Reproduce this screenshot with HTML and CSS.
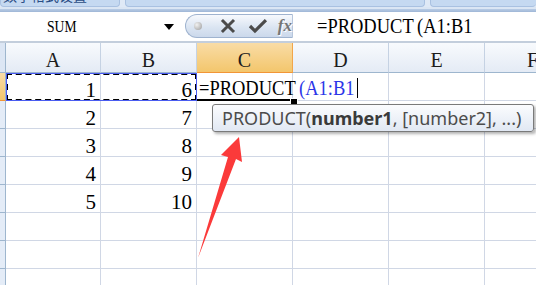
FILE: index.html
```html
<!DOCTYPE html>
<html lang="zh">
<head>
    <meta charset="UTF-8">
    <title>PRODUCT</title>
    <link rel="stylesheet" href="styles.css">
</head>
<body>
    <div class="ribbon">
        <div class="tabs">
            <div class="tab tab-first"><span class="tab-label">数字格式设置</span></div>
            <div class="tab tab-mid"></div>
            <div class="tab tab-last"></div>
        </div>
        <div class="ribbon-line"></div>
    </div>

    <div class="formula-bar">
        <div class="name-box">
            <span class="name">SUM</span>
            <span class="drop"></span>
        </div>
        <div class="fx-buttons">
            <span class="grip"></span>
            <svg class="btn-icon" width="16" height="16" viewBox="0 0 16 16">
                <path d="M3 3 L13 13 M13 3 L3 13" stroke="#4b4b4b" stroke-width="3" stroke-linecap="square"/>
            </svg>
            <svg class="btn-icon" width="20" height="16" viewBox="0 0 20 16">
                <path d="M2 8 L7 13 L18 2" stroke="#4b4b4b" stroke-width="3.2" fill="none"/>
            </svg>
            <span class="fx">fx</span>
        </div>
        <div class="formula-input">
            <span class="formula-text">=PRODUCT<span class="paren">(</span>A1:B1</span>
        </div>
    </div>
    <div class="bar-line"></div>

    <div class="sheet">
        <div class="corner"></div>
        <div class="col-head">A</div>
        <div class="col-head">B</div>
        <div class="col-head col-active">C</div>
        <div class="col-head">D</div>
        <div class="col-head">E</div>
        <div class="col-head">F</div>

        <div class="row-head row-active"></div>
        <div class="cell num">1</div>
        <div class="cell num">6</div>
        <div class="cell cell-edit">
            <span class="formula-text">=PRODUCT<span class="ref"><span class="paren">(</span>A1:B1</span></span><span class="caret"></span>
        </div>
        <div class="cell"></div>
        <div class="cell"></div>
        <div class="cell"></div>

        <div class="row-head"></div>
        <div class="cell num">2</div>
        <div class="cell num">7</div>
        <div class="cell"></div>
        <div class="cell"></div>
        <div class="cell"></div>
        <div class="cell"></div>

        <div class="row-head"></div>
        <div class="cell num">3</div>
        <div class="cell num">8</div>
        <div class="cell"></div>
        <div class="cell"></div>
        <div class="cell"></div>
        <div class="cell"></div>

        <div class="row-head"></div>
        <div class="cell num">4</div>
        <div class="cell num">9</div>
        <div class="cell"></div>
        <div class="cell"></div>
        <div class="cell"></div>
        <div class="cell"></div>

        <div class="row-head"></div>
        <div class="cell num">5</div>
        <div class="cell num">10</div>
        <div class="cell"></div>
        <div class="cell"></div>
        <div class="cell"></div>
        <div class="cell"></div>

        <div class="row-head"></div>
        <div class="cell"></div>
        <div class="cell"></div>
        <div class="cell"></div>
        <div class="cell"></div>
        <div class="cell"></div>
        <div class="cell"></div>

        <div class="row-head"></div>
        <div class="cell"></div>
        <div class="cell"></div>
        <div class="cell"></div>
        <div class="cell"></div>
        <div class="cell"></div>
        <div class="cell"></div>

        <div class="row-head"></div>
        <div class="cell"></div>
        <div class="cell"></div>
        <div class="cell"></div>
        <div class="cell"></div>
        <div class="cell"></div>
        <div class="cell"></div>

        <!-- copy marquee around A1:B1 -->
        <div class="marquee"></div>
        <div class="fill-handle"></div>

        <div class="tooltip">PRODUCT(<b>number1</b>, [number2], ...)</div>
    </div>

    <svg class="arrow" width="536" height="285" viewBox="0 0 536 285">
        <polygon points="198,258 228,157 221,155 239,137 242,162 236,159" fill="#fb3a3a"/>
    </svg>
</body>
</html>
```

FILE: styles.css
```css
body {
    margin: 0;
    padding: 0;
    width: 536px;
    height: 285px;
    overflow: hidden;
    background-color: #fff;
    position: relative;
    font-family: 'Liberation Serif', serif;
}

/* ribbon remains at the top */
.ribbon {
    height: 12px;
    background-color: #dbe6f4;
}

.tabs {
    display: flex;
    gap: 5px;
    height: 7px;
    background-color: #dfe9f6;
}

.tab {
    background-color: #c5d9f1;
    border: 1px solid #a9c1e1;
    border-top: none;
    border-radius: 0 0 4px 4px;
    overflow: hidden;
}

.tab-first {
    width: 118px;
}

.tab-mid {
    width: 298px;
}

.tab-last {
    flex: 1;
    border-right: none;
}

.tab-label {
    display: block;
    margin-top: -13px;
    margin-left: 2px;
    font-family: 'Noto Sans CJK SC', sans-serif;
    font-size: 14px;
    line-height: 16px;
    color: #2a4d85;
    white-space: nowrap;
}

.ribbon-line {
    height: 3px;
    margin-top: 2px;
    background: linear-gradient(#b9cde6, #9fb6d6);
}

/* formula bar */
.formula-bar {
    display: flex;
    height: 29px;
    background-color: #fff;
}

.name-box {
    width: 185px;
    display: flex;
    align-items: center;
}

.name {
    display: inline-block;
    margin-left: 47px;
    font-size: 17px;
    transform: scaleX(0.8);
    transform-origin: left center;
}

.drop {
    margin-left: auto;
    margin-right: 11px;
    width: 0;
    height: 0;
    border-left: 5px solid transparent;
    border-right: 5px solid transparent;
    border-top: 6px solid #000;
}

.fx-buttons {
    width: 108px;
    height: 24px;
    margin-top: 2px;
    display: flex;
    align-items: center;
    box-sizing: border-box;
    border: 1px solid #9fb3cf;
    border-right: 1px solid #b6c6dc;
    border-radius: 12px 0 0 12px;
    background: linear-gradient(#f7f9fd, #dbe5f2 55%, #cbd8eb);
}

.grip {
    width: 8px;
    height: 8px;
    margin-left: 8px;
    border-radius: 50%;
    background: radial-gradient(circle at 35% 35%, #f2f2f2, #9a9a9a);
}

.btn-icon {
    margin-left: 18px;
}

.btn-icon + .btn-icon {
    margin-left: 12px;
}

.fx {
    margin-left: 10px;
    font-family: 'Liberation Serif', serif;
    font-style: italic;
    font-weight: bold;
    font-size: 17px;
    color: #767676;
    text-shadow: 1px 1px 0 #fff;
}

.formula-input {
    flex: 1;
    display: flex;
    align-items: center;
    padding-left: 24px;
    padding-bottom: 2px;
    overflow: hidden;
}

.formula-text {
    display: inline-block;
    flex-shrink: 0;
    font-size: 22px;
    white-space: nowrap;
    transform: scaleX(0.84);
    transform-origin: left center;
}

.paren {
    margin-left: 4px;
}

.bar-line {
    height: 2px;
    background-color: #c3cedc;
}

/* sheet grid */
.sheet {
    position: relative;
    display: grid;
    grid-template-columns: 6px 95px repeat(5, 96px);
    grid-template-rows: 30px repeat(8, 28px);
    width: max-content;
}

.corner {
    background-color: #dce6f4;
    border-right: 1px solid #9eb6ce;
    border-bottom: 1px solid #9eb6ce;
}

.col-head {
    display: flex;
    align-items: center;
    justify-content: center;
    padding-top: 5px;
    background: linear-gradient(#f8fafd, #e4ebf5);
    border-right: 1px solid #c5d2e3;
    border-bottom: 1px solid #9eb6ce;
    font-size: 20px;
    color: #1c1c1c;
}

.col-active {
    background: linear-gradient(#f9dca6, #f3c66c);
    border-right-color: #f2a64a;
    border-bottom-color: #f29536;
}

.row-head {
    background-color: #e4ecf7;
    border-right: 1px solid #9eb6ce;
    border-bottom: 1px solid #9eb6ce;
}

.row-active {
    background: linear-gradient(#f9dca6, #f3c66c);
    border-bottom-color: #f29536;
}

.cell {
    box-sizing: border-box;
    border-right: 1px solid #d0d7e5;
    border-bottom: 1px solid #d0d7e5;
    font-size: 21px;
    display: flex;
    align-items: center;
}

.num {
    justify-content: flex-end;
    padding-right: 4px;
    padding-top: 7px;
}

.cell-edit {
    position: relative;
    z-index: 2;
    padding-left: 2px;
    padding-top: 4px;
    white-space: nowrap;
    overflow: visible;
    border-bottom: 2px solid #000;
}

.ref {
    color: #2b35e8;
}

.caret {
    display: inline-block;
    flex-shrink: 0;
    width: 1px;
    height: 20px;
    margin-left: -27px;
    background-color: #000;
}

.marquee {
    position: absolute;
    left: 6px;
    top: 30px;
    width: 191px;
    height: 28px;
    box-sizing: border-box;
    border: 2px dashed #000;
    outline: 1px solid #4a5cf0;
    outline-offset: -1px;
}

.fill-handle {
    position: absolute;
    left: 290px;
    top: 55px;
    width: 6px;
    height: 6px;
    background-color: #000;
    border: 1px solid #fff;
    z-index: 3;
}

.tooltip {
    position: absolute;
    left: 212px;
    top: 61px;
    width: 322px;
    height: 28px;
    box-sizing: border-box;
    padding-left: 9px;
    display: flex;
    align-items: center;
    border: 1px solid #7a7a7a;
    border-radius: 3px;
    background: linear-gradient(#fbfcfe, #e1e8f3);
    box-shadow: 2px 2px 3px rgba(0, 0, 0, 0.3);
    font-family: 'Noto Sans', sans-serif;
    font-size: 18px;
    color: #4c4c4c;
    white-space: nowrap;
    z-index: 4;
}

.tooltip b {
    color: #3a3a3a;
}

.arrow {
    position: absolute;
    left: 0;
    top: 0;
    pointer-events: none;
    z-index: 5;
}
```
